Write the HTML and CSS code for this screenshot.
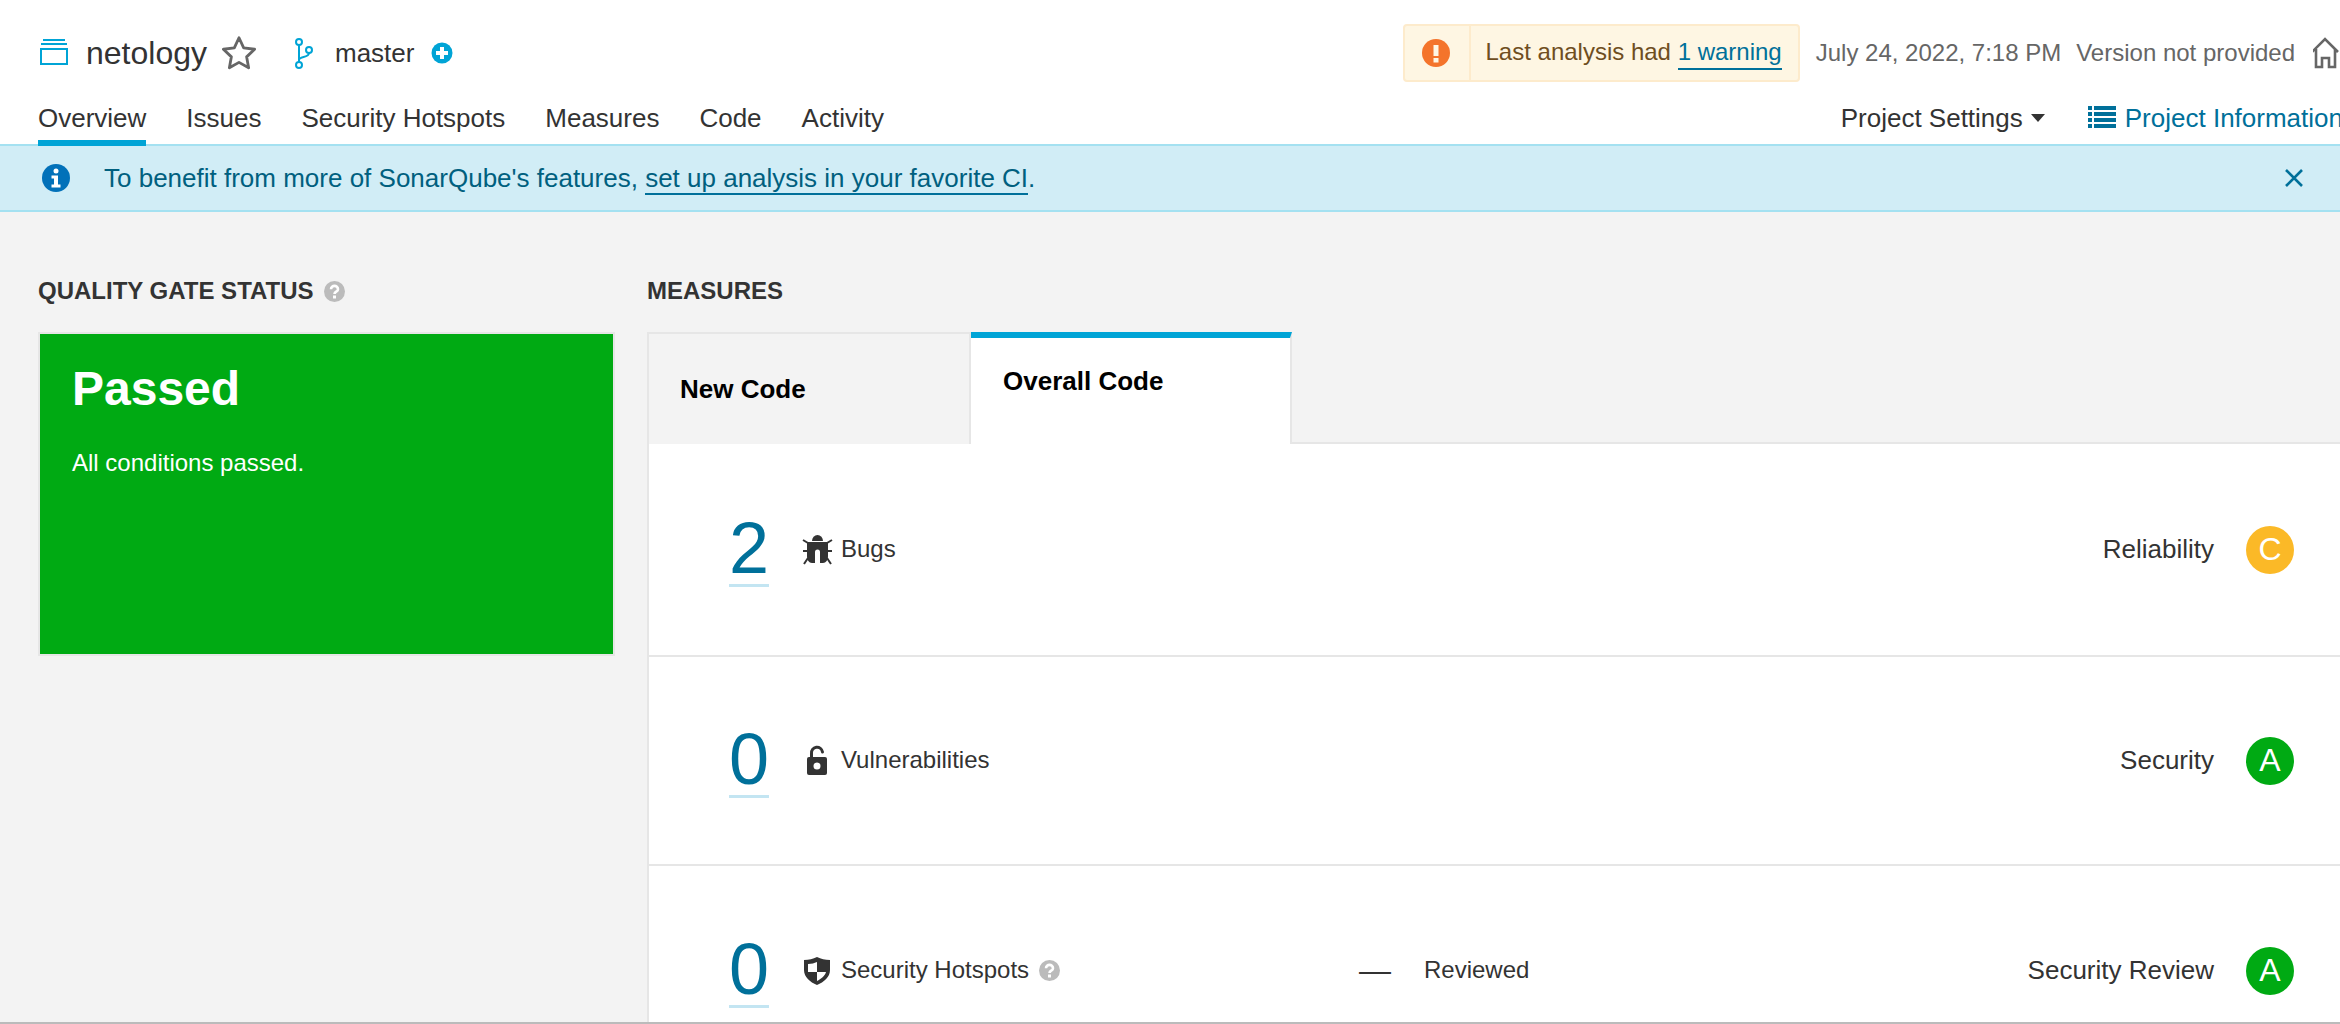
FILE: index.html
```html
<!DOCTYPE html>
<html lang="en">
  <head>
    <meta charset="utf-8" />
    <title>netology - Overview</title>
    <link rel="stylesheet" href="styles.css">
  </head>
  <body>
    <div class="page">
      <header class="header">
        <div class="project-row">
          <svg class="qualifier" width="32" height="32" viewBox="0 0 32 32"><path d="M5 3h22M3 7h26" stroke="#00a4d6" stroke-width="2" fill="none"/><rect x="3" y="12" width="26" height="15" stroke="#00a4d6" stroke-width="2" fill="none"/></svg>
          <span class="project-name">netology</span>
          <svg class="star" width="34" height="34" viewBox="1.500 1.500 29 29"><path d="M16 3l4 8.600 9.300 1.200-6.800 6.500 1.700 9.300-8.200-4.600-8.200 4.600 1.700-9.300-6.800-6.500 9.300-1.200z" stroke="#666" stroke-width="2.400" stroke-linejoin="round" fill="none"/></svg>
          <svg class="branch" width="32" height="32" viewBox="0 0 32 32"><g stroke="#00a4d6" stroke-width="2" fill="none"><circle cx="11" cy="5" r="3"/><circle cx="11" cy="28" r="3"/><circle cx="21" cy="13" r="3"/><path d="M11 8v17M21 16c0 5-10 3-10 7"/></g></svg>
          <span class="branch-name">master</span>
          <svg class="plus" width="24" height="24" viewBox="0 0 24 24"><circle cx="12" cy="12" r="10.500" fill="#00a4d6"/><path d="M6 12h12M12 6v12" stroke="#fff" stroke-width="4"/></svg>

          <div class="warning">
            <div class="warning-icon">
              <svg width="28" height="28" viewBox="0 0 28 28"><circle cx="14" cy="14" r="14" fill="#f4742b"/><rect x="11.500" y="6" width="5" height="11" fill="#fef6e3"/><rect x="11.500" y="19" width="5" height="4.500" fill="#fef6e3"/></svg>
            </div>
            <div class="warning-text">Last analysis had <a class="warning-link">1 warning</a></div>
          </div>
          <span class="meta date">July 24, 2022, 7:18 PM</span>
          <span class="meta version">Version not provided</span>
          <svg class="home" width="32" height="32" viewBox="2 0 32 32"><path d="M1 15L14 2l13 13M5 12v18h6v-9h7v9h6V12" stroke="#666" stroke-width="2.600" fill="none"/></svg>
        </div>

        <nav class="nav">
          <a class="nav-link active">Overview</a>
          <a class="nav-link">Issues</a>
          <a class="nav-link">Security Hotspots</a>
          <a class="nav-link">Measures</a>
          <a class="nav-link">Code</a>
          <a class="nav-link">Activity</a>
          <a class="nav-link settings">Project Settings<span class="caret"></span></a>
          <a class="nav-link info">
            <svg width="28" height="22" viewBox="0 0 28 22"><path d="M0 0h4v4H0zM6 0h22v4H6zM0 6h4v4H0zM6 6h22v4H6zM0 12h4v4H0zM6 12h22v4H6zM0 18h4v4H0zM6 18h22v4H6z" fill="#00709a"/></svg>
            Project Information
          </a>
        </nav>
      </header>

      <div class="banner">
        <svg class="banner-icon" width="28" height="28" viewBox="0 0 28 28"><circle cx="14" cy="14" r="14" fill="#0271b9"/><circle cx="14" cy="7" r="2.500" fill="#fff"/><path d="M9.500 11.500h6.500v9h2.500v3h-9v-3H12v-6H9.500z" fill="#fff"/></svg>
        <span class="banner-text">To benefit from more of SonarQube's features, <a class="banner-link">set up analysis in your favorite CI</a>.</span>
        <svg class="banner-close" width="18" height="18" viewBox="0 0 18 18"><path d="M1 1l16 16M17 1L1 17" stroke="#00709a" stroke-width="2.600"/></svg>
      </div>

      <main class="main">
        <section class="gate">
          <h2 class="section-title">Quality Gate Status
            <svg class="help" width="21" height="21" viewBox="0 0 21 21"><circle cx="10.500" cy="10.500" r="10.500" fill="#bbb"/><path d="M7 8.200c0-4.400 7-4.400 7 0 0 2.600-3.500 2.400-3.500 4.800" stroke="#fff" stroke-width="2.600" fill="none"/><rect x="9" y="14.500" width="3" height="3" fill="#fff"/></svg>
          </h2>
          <div class="gate-box">
            <div class="gate-status">Passed</div>
            <div class="gate-note">All conditions passed.</div>
          </div>
        </section>

        <section class="measures">
          <h2 class="section-title">Measures</h2>
          <div class="tabs">
            <div class="tab">New Code</div>
            <div class="tab selected">Overall Code</div>
            <div class="tab-rest"></div>
          </div>
          <div class="panel">
            <div class="measure first">
              <div class="measure-main">
                <a class="count">2</a>
                <svg width="32" height="32" viewBox="0 0 32 32"><path d="M11 7a5.500 6 0 0 1 11 0z" fill="#333"/><path d="M6 8h21v14c0 4-2 7-5 7h-3V18a2.500 2.500 0 0 0-5 0v11h-3c-3 0-5-3-5-7z" fill="#333"/><path d="M2 6l5 3M31 6l-5 3M2 17h5M31 17h-5M3 30l4-6M30 30l-4-6" stroke="#333" stroke-width="2" fill="none"/></svg>
                <span class="measure-label">Bugs</span>
              </div>
              <div></div>
              <div class="rating"><span>Reliability</span><span class="badge c">C</span></div>
            </div>
            <div class="measure second">
              <div class="measure-main">
                <a class="count">0</a>
                <svg width="32" height="32" viewBox="0 0 32 32"><path d="M10.500 13V8.500a5.500 5.500 0 0 1 11-1.500" stroke="#333" stroke-width="3" stroke-linecap="round" fill="none"/><rect x="6" y="12" width="20" height="18" rx="2" fill="#333"/><circle cx="16" cy="21" r="3.500" fill="#fff"/></svg>
                <span class="measure-label">Vulnerabilities</span>
              </div>
              <div></div>
              <div class="rating"><span>Security</span><span class="badge a">A</span></div>
            </div>
            <div class="measure">
              <div class="measure-main">
                <a class="count">0</a>
                <svg width="32" height="32" viewBox="0 0 32 32"><path d="M16 2c4 2 8 3 13 3v10c0 7-6 12-13 15C9 27 3 22 3 15V5c5 0 9-1 13-3z" fill="#333"/><path d="M7 9c4 0 6-1 9-2v10H7zM16 17h9c-1 4-5 7-9 9z" fill="#fff"/></svg>
                <span class="measure-label">Security Hotspots</span>
                <svg class="help" width="21" height="21" viewBox="0 0 21 21"><circle cx="10.500" cy="10.500" r="10.500" fill="#bbb"/><path d="M7 8.200c0-4.400 7-4.400 7 0 0 2.600-3.500 2.400-3.500 4.800" stroke="#fff" stroke-width="2.600" fill="none"/><rect x="9" y="14.500" width="3" height="3" fill="#fff"/></svg>
              </div>
              <div class="reviewed"><span class="dash">—</span><span class="measure-label">Reviewed</span></div>
              <div class="rating"><span>Security Review</span><span class="badge a">A</span></div>
            </div>
          </div>
        </section>
      </main>
    </div>
  </body>
</html>
```

FILE: styles.css
```css
* {
  box-sizing: border-box;
}

html,
body {
  margin: 0;
  height: 100%;
  overflow: hidden;
}

body {
  font-family: "Liberation Sans", Arial, sans-serif;
  color: #333;
  background-color: #f3f3f3;
}

svg {
  flex: none;
  display: block;
}

.page {
  display: flex;
  flex-direction: column;
  height: 1024px;
  border-bottom: 2px solid #bbb;
}

/* header */
.header {
  height: 146px;
  padding: 24px 0 0 38px;
  background-color: #fff;
  border-bottom: 2px solid #a4e1f1;
}

.project-row {
  display: flex;
  align-items: center;
  height: 58px;
  margin-right: -5px;
}

.project-name {
  margin-left: 16px;
  font-size: 32px;
}

.star {
  margin-left: 15px;
}

.branch {
  margin-left: 32px;
}

.branch-name {
  margin-left: 15px;
  font-size: 26px;
}

.plus {
  margin-left: 16px;
}

.warning {
  display: flex;
  align-items: stretch;
  height: 58px;
  margin-left: auto;
  background-color: #fef6e3;
  border: 2px solid #fdebcc;
  border-radius: 4px;
  font-size: 24px;
  color: #6f4e1f;
}

.warning-icon {
  display: flex;
  align-items: center;
  justify-content: center;
  width: 66px;
  padding-right: 2px;
  border-right: 2px solid #fdebcc;
}

.warning-text {
  padding: 0 16px 0 15px;
  line-height: 52px;
}

.warning-link {
  color: #00709a;
  padding-bottom: 3px;
  border-bottom: 2px solid #00709a;
}

.meta {
  font-size: 24px;
  color: #666;
}

.date {
  margin-left: 16px;
}

.version {
  margin-left: 15px;
}

.home {
  margin-left: 18px;
}

.nav {
  display: flex;
  gap: 40px;
  margin: 21px -3px 0 0;
}

.nav-link {
  display: flex;
  align-items: flex-start;
  height: 43px;
  font-size: 26px;
  line-height: 30px;
  white-space: nowrap;
}

.nav-link.active {
  border-bottom: 6px solid #00a4d6;
}

.settings {
  margin-left: auto;
  margin-right: 3px;
}

.caret {
  width: 0;
  height: 0;
  margin: 11px 0 0 8px;
  border-left: 7px solid transparent;
  border-right: 7px solid transparent;
  border-top: 8px solid #333;
}

.info {
  gap: 9px;
  color: #00709a;
}

.info svg {
  margin-top: 3px;
}

/* banner */
.banner {
  display: flex;
  align-items: center;
  flex: none;
  height: 66px;
  padding: 0 37px 0 42px;
  background-color: #d1edf6;
  border-bottom: 2px solid #a4e1f1;
  color: #00607f;
}

.banner-text {
  margin-left: 34px;
  font-size: 26px;
}

.banner-link {
  color: #00607f;
  border-bottom: 2px solid #00709a;
}

.banner-close {
  margin-left: auto;
}

/* main area */
.main {
  display: grid;
  grid-template-columns: 577px 1fr;
  gap: 32px;
  flex: 1;
  min-height: 0;
  padding: 64px 0 0 38px;
  overflow: hidden;
}

.section-title {
  display: flex;
  align-items: center;
  height: 30px;
  margin: 0;
  font-size: 24px;
  line-height: 30px;
  font-weight: bold;
  text-transform: uppercase;
}

.gate-box {
  height: 324px;
  margin-top: 26px;
  padding: 27px 32px;
  background-color: #00aa13;
  border: 2px solid #e6e6e6;
  color: #fff;
}

.gate-status {
  font-size: 48px;
  line-height: 56px;
  font-weight: bold;
}

.gate-note {
  margin-top: 31px;
  font-size: 24px;
  line-height: 30px;
}

.tabs {
  display: flex;
  height: 112px;
  margin-top: 26px;
}

.tab {
  width: 324px;
  padding: 40px 31px 0;
  background-color: #f3f3f3;
  border-top: 2px solid #e6e6e6;
  border-left: 2px solid #e6e6e6;
  border-right: 2px solid #e6e6e6;
  font-size: 26px;
  line-height: 30px;
  font-weight: bold;
  color: #000;
}

.tab.selected {
  width: 321px;
  padding: 28px 32px 0;
  background-color: #fff;
  border-top: 6px solid #00a4d6;
  border-left: 0;
}

.tab-rest {
  flex: 1;
  border-bottom: 2px solid #e6e6e6;
}

.panel {
  background-color: #fff;
  border-left: 2px solid #e6e6e6;
}

.measure {
  display: grid;
  grid-template-columns: 630px 1fr auto;
  align-items: center;
  padding: 67px 46px 67px 80px;
  border-bottom: 2px solid #e6e6e6;
}

.measure.first {
  padding-top: 68px;
  padding-bottom: 68px;
}

.measure.second {
  padding-top: 66px;
  padding-bottom: 66px;
}

.measure-main {
  display: flex;
  align-items: center;
}

.count {
  width: 40px;
  margin-right: 32px;
  font-size: 72px;
  line-height: 72px;
  color: #00709a;
  border-bottom: 3px solid #c3e5f2;
}

.measure-label {
  margin: 0 0 2px 8px;
  font-size: 24px;
}

.help {
  margin-left: 10px;
}

.reviewed {
  display: flex;
  align-items: center;
}

.dash {
  font-size: 32px;
}

.reviewed .measure-label {
  margin-left: 33px;
}

.rating {
  display: flex;
  align-items: center;
  gap: 32px;
  font-size: 26px;
}

.badge {
  display: flex;
  align-items: center;
  justify-content: center;
  width: 48px;
  height: 48px;
  border-radius: 50%;
  font-size: 32px;
  color: #fff;
}

.badge.a {
  background-color: #00aa13;
}

.badge.c {
  background-color: #fbb927;
}
```
